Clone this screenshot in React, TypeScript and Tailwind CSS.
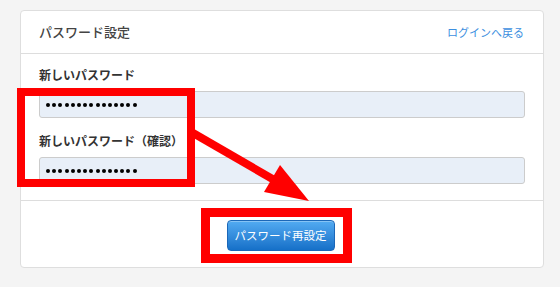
const Dots = () => (
  <div className="flex gap-[2.2px]">
    {Array.from({ length: 15 }).map((_, i) => (
      <span key={i} className="w-[4px] h-[4px] rounded-full bg-black" />
    ))}
  </div>
);

export default function App() {
  return (
    <div className="relative min-h-[287px] w-[560px] bg-[#f4f4f4] pt-[10px] pl-[20px] font-['Noto_Sans_CJK_JP',sans-serif]">
      <div className="w-[524px] h-[258px] bg-white border border-[#dedede] rounded-[4px] flex flex-col">
        {/* Header */}
        <div className="h-[43px] flex items-center justify-between pl-[18px] pr-[19px] border-b border-[#dddddd]">
          <h1 className="text-[13px] font-medium text-[#444]">パスワード設定</h1>
          <a className="text-[11px] text-[#3d8fe0]">ログインへ戻る</a>
        </div>

        {/* Body */}
        <div className="px-[18px] pt-[13px] pb-[16px] border-b border-[#dddddd] flex flex-col">
          <label className="text-[12px] font-bold text-[#333] leading-[16px]">新しいパスワード</label>
          <div className="mt-[8px] h-[27px] rounded-[3px] border border-[#cccccc] bg-[#e8eff8] flex items-center pl-[6px]">
            <Dots />
          </div>
          <label className="mt-[15px] text-[12px] font-bold text-[#333] leading-[16px]">新しいパスワード（確認）</label>
          <div className="mt-[8px] h-[27px] rounded-[3px] border border-[#cccccc] bg-[#e8eff8] flex items-center pl-[6px]">
            <Dots />
          </div>
        </div>

        {/* Footer */}
        <div className="flex justify-center pt-[19px] pr-[3px]">
          <button className="w-[108px] h-[31px] rounded-[4px] border border-[#1b67b8] bg-gradient-to-b from-[#52abf2] to-[#1570c8] text-white text-[11.5px] shadow-[inset_0_1px_0_rgba(255,255,255,0.3)]">
            パスワード再設定
          </button>
        </div>
      </div>

      {/* Red annotation overlay */}
      <svg className="absolute left-0 top-0 pointer-events-none" width="560" height="287" viewBox="0 0 560 287">
        <rect x="21" y="92" width="170" height="91" fill="none" stroke="#ff0000" strokeWidth="8" />
        <rect x="205.5" y="212.5" width="142" height="46" fill="none" stroke="#ff0000" strokeWidth="9" />
        <line x1="193" y1="133" x2="276" y2="181" stroke="#ff0000" strokeWidth="8" />
        <polygon points="280,165 264,192 309,201" fill="#ff0000" />
      </svg>
    </div>
  );
}
